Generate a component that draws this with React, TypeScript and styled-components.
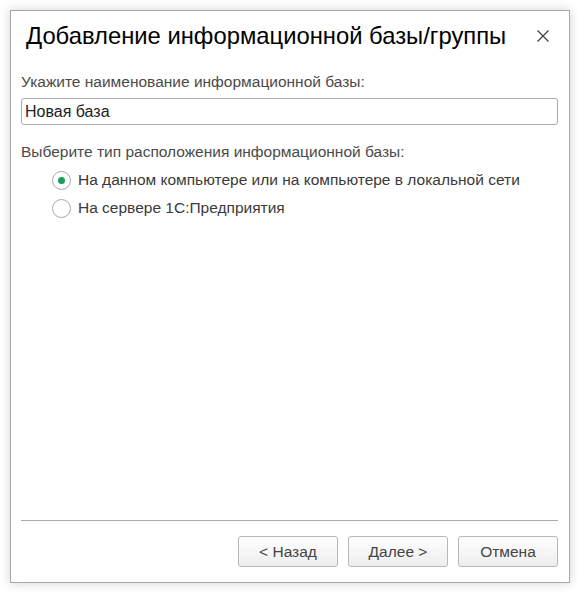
import React, { useState } from "react";
import styled, { createGlobalStyle } from "styled-components";

const Global = createGlobalStyle`
  html, body { margin: 0; padding: 0; background: #ffffff; }
  body { font-family: Arial, "Liberation Sans", sans-serif; }
  * { box-sizing: border-box; }
`;

const Page = styled.div`
  padding: 10px 9px 10px 10px;
`;

const Window = styled.div`
  width: 560px;
  height: 573px;
  border: 1px solid #a8a8a8;
  background: #ffffff;
  box-shadow: 0 0 10px rgba(0, 0, 0, 0.18);
  display: flex;
  flex-direction: column;
  padding: 0 11px 0 10px;
`;

const Header = styled.div`
  height: 50px;
  display: flex;
  align-items: center;
  justify-content: space-between;
  padding-left: 5px;
  padding-right: 8px;
`;

const Title = styled.div`
  font-size: 23.8px;
  color: #000;
  line-height: 28px;
`;

const CloseButton = styled.button`
  width: 14px;
  height: 14px;
  padding: 0;
  border: 0;
  background: transparent;
  display: flex;
  align-items: center;
  justify-content: center;
  cursor: pointer;
`;

const Label = styled.div<{ $top: number }>`
  margin-top: ${(p) => p.$top}px;
  font-size: 15.5px;
  line-height: 18px;
  color: #4a4a4a;
`;

const Input = styled.input`
  margin-top: 7px;
  height: 27px;
  width: 100%;
  border: 1px solid #aaaaaa;
  border-radius: 3px;
  padding: 0 3px;
  font-family: Arial, "Liberation Sans", sans-serif;
  font-size: 16px;
  color: #222;
  outline: none;
  caret-color: #000;
`;

const RadioGroup = styled.div`
  margin-top: 5px;
  padding-left: 31px;
  display: flex;
  flex-direction: column;
`;

const RadioRow = styled.label`
  height: 28px;
  display: flex;
  align-items: center;
  gap: 7px;
  font-size: 15.5px;
  color: #3a3a3a;
  cursor: pointer;
`;

const RadioCircle = styled.span<{ $checked: boolean }>`
  width: 19px;
  height: 19px;
  border-radius: 50%;
  border: 1px solid #a9a9a9;
  background: #fff;
  display: flex;
  align-items: center;
  justify-content: center;
  flex: none;
  &::after {
    content: "";
    width: 7px;
    height: 7px;
    border-radius: 50%;
    background: #16a05a;
    display: ${(p) => (p.$checked ? "block" : "none")};
  }
`;

const Spacer = styled.div`
  flex: 1;
`;

const Separator = styled.div`
  height: 1px;
  background: #a9a9a9;
`;

const Footer = styled.div`
  display: flex;
  justify-content: flex-end;
  gap: 10px;
  padding: 15px 0 15px 0;
`;

const Button = styled.button`
  width: 100px;
  height: 31px;
  border: 1px solid #b8b8b8;
  border-radius: 3px;
  background: linear-gradient(#ffffff, #ededed);
  font-family: Arial, "Liberation Sans", sans-serif;
  font-size: 15.5px;
  color: #444;
  cursor: pointer;
  padding: 0;
`;

export default function App() {
  const [name, setName] = useState("Новая база");
  const [choice, setChoice] = useState(0);
  const options = [
    "На данном компьютере или на компьютере в локальной сети",
    "На сервере 1С:Предприятия",
  ];
  return (
    <>
      <Global />
      <Page>
        <Window>
          <Header>
            <Title>Добавление информационной базы/группы</Title>
            <CloseButton aria-label="Закрыть">
              <svg width="12" height="12" viewBox="0 0 12 12">
                <path d="M0.5 0.5 L11.5 11.5 M11.5 0.5 L0.5 11.5" stroke="#444" strokeWidth="1.3" />
              </svg>
            </CloseButton>
          </Header>
          <Label $top={12}>Укажите наименование информационной базы:</Label>
          <Input value={name} onChange={(e) => setName(e.target.value)} autoFocus />
          <Label $top={18}>Выберите тип расположения информационной базы:</Label>
          <RadioGroup>
            {options.map((o, i) => (
              <RadioRow key={o} onClick={() => setChoice(i)}>
                <RadioCircle $checked={choice === i} />
                {o}
              </RadioRow>
            ))}
          </RadioGroup>
          <Spacer />
          <Separator />
          <Footer>
            <Button>&lt; Назад</Button>
            <Button>Далее &gt;</Button>
            <Button>Отмена</Button>
          </Footer>
        </Window>
      </Page>
    </>
  );
}
